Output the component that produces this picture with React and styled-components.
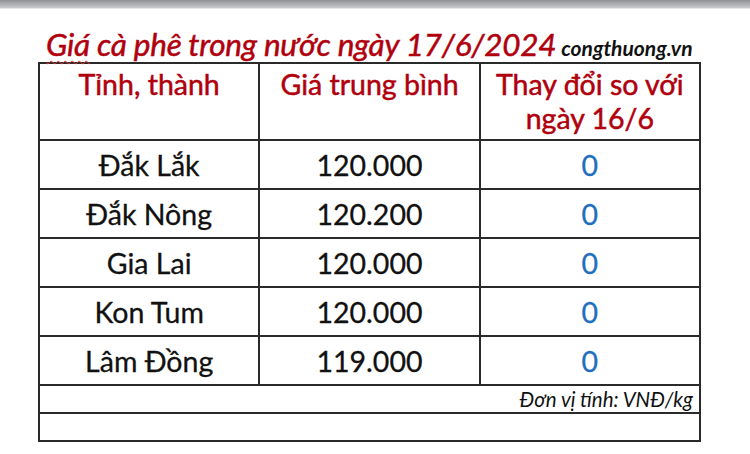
import React from 'react';
import styled, { createGlobalStyle } from 'styled-components';

const GlobalStyle = createGlobalStyle`
  html, body {
    margin: 0;
    padding: 0;
    background: #fff;
  }
  body {
    font-family: Lato, 'Open Sans', sans-serif;
  }
`;

const Page = styled.div`
  width: 750px;
  height: 454px;
  overflow: hidden;
  background: #fff;
`;

const TopBar = styled.div`
  height: 8px;
  background: linear-gradient(#8f9194, #c9cacc);
  border-bottom: 1px solid #e6e6e6;
`;

const TitleRow = styled.div`
  display: flex;
  align-items: baseline;
  padding: 16px 0 0 46px;
  height: 37px;
`;

const Title = styled.h1`
  margin: 0;
  font-family: Lato, sans-serif;
  font-style: italic;
  font-weight: 400;
  font-size: 31.5px;
  color: #b0000e;
  letter-spacing: -0.25px;
  white-space: nowrap;
  -webkit-text-stroke: 0.5px #b0000e;
`;

const Spell = styled.span`
  text-decoration: underline wavy #e03030;
  text-decoration-thickness: 1px;
  text-decoration-skip-ink: none;
  text-underline-offset: 4px;
`;

const Source = styled.span`
  margin-left: 5px;
  font-family: Lato, sans-serif;
  font-style: italic;
  font-weight: 700;
  font-size: 21px;
  color: #111;
`;

const Table = styled.table`
  margin-left: 38px;
  width: 663px;
  border-collapse: collapse;
  table-layout: fixed;
  font-family: Lato, sans-serif;

  td, th {
    border: 2px solid #2a2a2a;
    padding: 0;
    text-align: center;
  }
`;

const HeadCell = styled.th`
  height: 72px;
  vertical-align: top;
  font-weight: 400;
  font-size: 28.5px;
  line-height: 34px;
  color: #b0000e;
  padding-top: 3px !important;
  -webkit-text-stroke: 0.5px #b0000e;
`;

const Cell = styled.td`
  height: 47px;
  font-size: 28.5px;
  color: ${(p) => (p.blue ? '#1f6fbf' : '#111')};
  -webkit-text-stroke: 0.3px ${(p) => (p.blue ? '#1f6fbf' : '#111')};
`;

const NoteCell = styled.td`
  height: 26px;
  text-align: right !important;
  font-style: italic;
  font-size: 20.5px;
  color: #111;
  padding-right: 6px !important;
`;

const EmptyCell = styled.td`
  height: 26px;
`;

const rows = [
  ['Đắk Lắk', '120.000', '0'],
  ['Đắk Nông', '120.200', '0'],
  ['Gia Lai', '120.000', '0'],
  ['Kon Tum', '120.000', '0'],
  ['Lâm Đồng', '119.000', '0'],
];

export default function App() {
  return (
    <Page>
      <GlobalStyle />
      <TopBar />
      <TitleRow>
        <Title>
          <Spell>Giá</Spell> cà phê trong nước ngày 17/6/2024
        </Title>
        <Source>congthuong.vn</Source>
      </TitleRow>
      <Table>
        <thead>
          <tr>
            <HeadCell>Tỉnh, thành</HeadCell>
            <HeadCell>Giá trung bình</HeadCell>
            <HeadCell>
              Thay đổi so với
              <br />
              ngày 16/6
            </HeadCell>
          </tr>
        </thead>
        <tbody>
          {rows.map((r) => (
            <tr key={r[0]}>
              <Cell>{r[0]}</Cell>
              <Cell>{r[1]}</Cell>
              <Cell blue>{r[2]}</Cell>
            </tr>
          ))}
          <tr>
            <NoteCell colSpan={3}>Đơn vị tính: VNĐ/kg</NoteCell>
          </tr>
          <tr>
            <EmptyCell colSpan={3} />
          </tr>
        </tbody>
      </Table>
    </Page>
  );
}
